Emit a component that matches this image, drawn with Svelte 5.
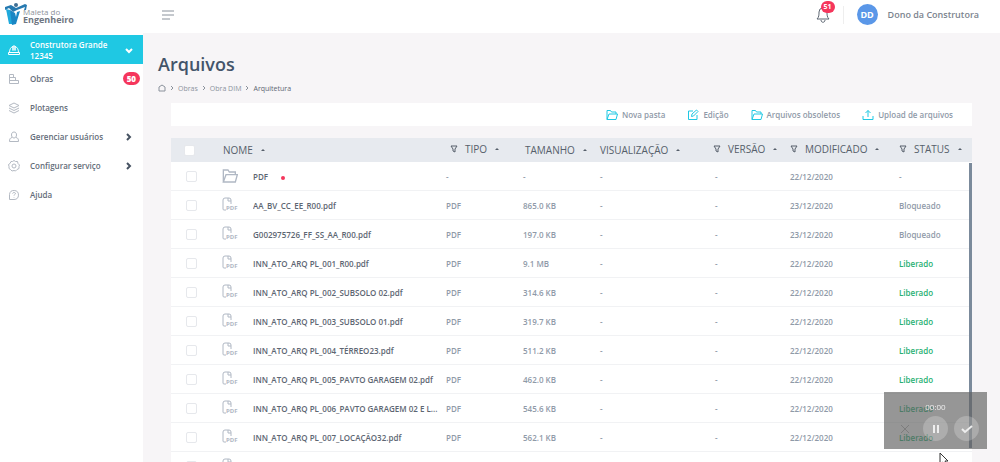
<script>
  let collapsed = $state(false)
  let allSelected = $state(false)

  const menu = [
    { label: 'Obras', icon: 'building', badge: 50 },
    { label: 'Plotagens', icon: 'layers' },
    { label: 'Gerenciar usuários', icon: 'user', children: true },
    { label: 'Configurar serviço', icon: 'gear', children: true },
    { label: 'Ajuda', icon: 'help' },
  ]

  const actions = [
    { label: 'Nova pasta', icon: 'folder' },
    { label: 'Edição', icon: 'edit' },
    { label: 'Arquivos obsoletos', icon: 'folder' },
    { label: 'Upload de arquivos', icon: 'upload' },
  ]

  const columns = [
    { id: 'tipo', label: 'TIPO', filter: true },
    { id: 'tamanho', label: 'TAMANHO' },
    { id: 'visualizacao', label: 'VISUALIZAÇÃO' },
    { id: 'versao', label: 'VERSÃO', filter: true },
    { id: 'modificado', label: 'MODIFICADO', filter: true },
    { id: 'status', label: 'STATUS', filter: true },
  ]

  const pdf = (name, size, date, status) => ({ name, type: 'PDF', size, date, status })

  const files = [
    { name: 'PDF', folder: true, type: '-', size: '-', date: '22/12/2020', status: '-' },
    pdf('AA_BV_CC_EE_R00.pdf', '865.0 KB', '23/12/2020', 'Bloqueado'),
    pdf('G002975726_FF_SS_AA_R00.pdf', '197.0 KB', '23/12/2020', 'Bloqueado'),
    pdf('INN_ATO_ARQ PL_001_R00.pdf', '9.1 MB', '22/12/2020', 'Liberado'),
    pdf('INN_ATO_ARQ PL_002_SUBSOLO 02.pdf', '314.6 KB', '22/12/2020', 'Liberado'),
    pdf('INN_ATO_ARQ PL_003_SUBSOLO 01.pdf', '319.7 KB', '22/12/2020', 'Liberado'),
    pdf('INN_ATO_ARQ PL_004_TÉRREO23.pdf', '511.2 KB', '22/12/2020', 'Liberado'),
    pdf('INN_ATO_ARQ PL_005_PAVTO GARAGEM 02.pdf', '462.0 KB', '22/12/2020', 'Liberado'),
    pdf('INN_ATO_ARQ PL_006_PAVTO GARAGEM 02 E L...', '545.6 KB', '22/12/2020', 'Liberado'),
    pdf('INN_ATO_ARQ PL_007_LOCAÇÃO32.pdf', '562.1 KB', '22/12/2020', 'Liberado'),
    { name: '' },
  ]
</script>

{#snippet icon(name)}
  <svg class="icon" viewBox="0 0 24 24" aria-hidden="true">
    {#if name === 'building'}
      <path d="M3 21V3h8v6H3M3 9h12v6H3M3 15h18v6H3" />
    {:else if name === 'layers'}
      <path d="M12 2l10 5-10 5L2 7zM2 12l10 5 10-5M2 17l10 5 10-5" />
    {:else if name === 'user'}
      <path d="M12 2c4 0 5 3 5 6s-2 6-5 6-5-3-5-6 1-6 5-6zM8 13c-4 1-5 3-5 8h18c0-5-1-7-5-8" />
    {:else if name === 'gear'}
      <path d="M12 1l3 2 4 0 1 4 3 3-1 3 0 4-4 2-3 3-3-1-4 1-3-3-3-2 0-4-1-4 3-2 2-4 3 0z" />
      <circle cx="12" cy="12" r="4" />
    {:else if name === 'help'}
      <path d="M3 21V11a9 9 0 1 1 9 10zM9 9c1-3 6-2 6 0 0 2-3 2-3 4M12 16v1" />
    {:else if name === 'folder'}
      <path d="M2 21V3h7l2 3h9v4M2 21L6 10h17l-3 11z" />
    {:else if name === 'edit'}
      <path d="M12 4H3v17h17v-9M9 15l1-5 9-8 3 3-9 9z" />
    {:else if name === 'upload'}
      <path d="M12 16V3M7 8l5-5 5 5M2 14v7h20v-7" />
    {/if}
  </svg>
{/snippet}

<div class="app">
  <aside class:collapsed>
    <a class="logo" href="#inicio">
      <svg viewBox="0 0 24 24" aria-hidden="true">
        <path d="M2 7l4 1 3 6-1 8H5z" fill="#1fa9dc" />
        <path d="M6 8l5 3 1 4 1-5 3-1-4 13-4 1z" fill="#1a86c4" />
        <path d="M1 5l6-2 5 3 9-4 2 1-1 5h-2l1-3-8 3-4 2-4-4-4 2z" fill="#2679b0" />
        <circle cx="12" cy="3" r="2" fill="#3f6f94" />
      </svg>
      <span>Maleta do<strong>Engenheiro</strong></span>
    </a>
    <button class="company">
      <svg class="icon" viewBox="0 0 24 24" aria-hidden="true">
        <path d="M1 17h22v4H1zM3 17c0-7 3-11 7-12v8V4h4v9V5c4 1 7 5 7 12" />
      </svg>
      <span>Construtora Grande 12345</span>
      <svg class="chevron" viewBox="0 0 8 8" aria-hidden="true"><path d="M1 3l3 3 3-3" /></svg>
    </button>
    <nav>
      {#each menu as item}
        <a href="#{item.icon}">
          {@render icon(item.icon)}
          <span>{item.label}</span>
          {#if item.badge}<b class="badge">{item.badge}</b>{/if}
          {#if item.children}
            <svg class="chevron" viewBox="0 0 8 8" aria-hidden="true"><path d="M2 1l3 3-3 3" /></svg>
          {/if}
        </a>
      {/each}
    </nav>
  </aside>

  <div class="page">
    <header>
      <button class="toggle" aria-label="Menu" onclick={() => (collapsed = !collapsed)}>
        <svg viewBox="0 0 12 10" aria-hidden="true"><path d="M0 1h12M0 5h12M0 9h8" /></svg>
      </button>
      <button class="bell" aria-label="Notificações">
        <svg viewBox="0 0 16 18" aria-hidden="true">
          <path d="M2 13c2-2 2-4 2-7a4 4 0 0 1 8 0c0 3 0 5 2 7zM6 14c0 3 4 3 4 0" />
        </svg>
        <b class="count">51</b>
      </button>
      <div class="profile">
        <span class="avatar">DD</span>
        <span>Dono da Construtora</span>
      </div>
    </header>

    <main>
      <h1>Arquivos</h1>
      <div class="breadcrumb">
        <a href="#inicio" aria-label="Início">
          <svg class="home" viewBox="0 0 8 8" aria-hidden="true"><path d="M1 7V3l3-2 3 2v4z" /></svg>
        </a>
        {#each ['Obras', 'Obra DIM', 'Arquitetura'] as crumb}
          <svg class="sep" viewBox="0 0 4 8" aria-hidden="true"><path d="M1 2l2 2-2 2" /></svg>
          <a href="#{crumb}">{crumb}</a>
        {/each}
      </div>

      <div class="toolbar">
        {#each actions as action}
          <button>{@render icon(action.icon)}{action.label}</button>
        {/each}
      </div>

      <div class="files">
        <table>
          <colgroup>
            <col class="c-check" />
            <col class="c-icon" />
            <col />
            {#each columns as column}
              <col class="c-{column.id}" />
            {/each}
          </colgroup>
          <thead>
            <tr>
              <th class="check">
                <input type="checkbox" aria-label="Selecionar todos" bind:checked={allSelected} />
              </th>
              <th class="nome" colspan="2"><div class="head">NOME<i class="sort"></i></div></th>
              {#each columns as column}
                <th class={column.id}>
                  <div class="head" class:filtered={column.filter}>
                    {#if column.filter}
                      <svg class="filter" viewBox="0 0 8 8" aria-hidden="true">
                        <path d="M1 1h6L5 4v3L3 6V4z" />
                      </svg>
                    {/if}
                    {column.label}<i class="sort"></i>
                  </div>
                </th>
              {/each}
            </tr>
          </thead>
          <tbody>
            {#each files as file}
              <tr>
                <td class="check">
                  <input type="checkbox" aria-label="Selecionar {file.name}" checked={allSelected} />
                </td>
                <td class="kind">
                  {#if file.folder}
                    {@render icon('folder')}
                  {:else}
                    <span class="pdf">
                      <svg viewBox="0 0 16 16" aria-hidden="true">
                        <path d="M4 13H2Q1 13 1 12V3Q1 1 3 1h4q2 0 2 2v4M6 1v3h3" />
                      </svg>
                      {#if file.type}<small>PDF</small>{/if}
                    </span>
                  {/if}
                </td>
                <td class="name">{file.name}{#if file.folder}<i class="dot"></i>{/if}</td>
                <td>{file.type}</td>
                <td>{file.size}</td>
                <td>{file.type && '-'}</td>
                <td class="versao">{file.type && '-'}</td>
                <td>{file.date}</td>
                <td class:released={file.status === 'Liberado'}>{file.status}</td>
              </tr>
            {/each}
          </tbody>
        </table>
        <div class="scrollbar"></div>
      </div>
    </main>
  </div>
</div>

<div class="recorder">
  <time>00:00</time>
  <div class="controls">
    <button class="cancel" aria-label="Cancelar">
      <svg viewBox="0 0 12 12" aria-hidden="true"><path d="M2 2l8 8M10 2l-8 8" /></svg>
    </button>
    <button aria-label="Pausar">
      <svg viewBox="0 0 12 12" aria-hidden="true"><path d="M4 2v8M8 2v8" /></svg>
    </button>
    <button aria-label="Concluir">
      <svg viewBox="0 0 12 12" aria-hidden="true"><path d="M1 6l3 3 7-6" /></svg>
    </button>
  </div>
</div>
<svg class="cursor" viewBox="0 0 10 14" aria-hidden="true">
  <path d="M1 1v11l3-2 2 4 2-1-2-4h3z" />
</svg>

<style>
  :global(body) {
    margin: 0;
    overflow: hidden;
    font-family: 'Open Sans', 'Noto Sans', sans-serif;
    color: #646d79;
    background: #f7f5f7;
  }
  svg {
    display: block;
    flex: none;
    fill: none;
    stroke: currentColor;
  }
  a {
    color: inherit;
    text-decoration: none;
  }
  button {
    display: flex;
    align-items: center;
    padding: 0;
    border: 0;
    background: none;
    color: inherit;
    font: inherit;
    cursor: pointer;
  }
  .icon {
    width: 12px;
    height: 12px;
    stroke-width: 2;
  }
  .app {
    display: flex;
    height: 100vh;
  }
  aside {
    flex: none;
    width: 143px;
    background: #fff;
  }
  aside.collapsed {
    display: none;
  }
  .logo {
    display: flex;
    height: 35px;
    padding-left: 4px;
    box-sizing: border-box;
    font-size: 8px;
    line-height: 8px;
    color: #8d939b;
  }
  .logo svg {
    width: 24px;
    height: 24px;
    margin-right: -5px;
    margin-top: 2px;
    stroke: none;
  }
  .logo span {
    padding-top: 8px;
  }
  .logo strong {
    display: block;
    font-size: 9px;
    color: #6f7681;
  }
  .company {
    width: 100%;
    height: 29px;
    padding: 0 10px 0 8px;
    gap: 10px;
    background: #1fc8e3;
    color: #fff;
    font-size: 8px;
    font-weight: 600;
    line-height: 11px;
    text-align: left;
  }
  .company span,
  nav span {
    flex: 1;
  }
  .chevron {
    width: 8px;
    height: 8px;
    stroke-width: 2;
  }
  nav {
    display: flex;
    flex-direction: column;
  }
  nav a {
    display: flex;
    align-items: center;
    gap: 10px;
    height: 29px;
    padding: 0 10px 0 8px;
    font-size: 8px;
    font-weight: 600;
  }
  nav .icon {
    color: #b3b9c2;
  }
  nav .chevron {
    color: #465262;
  }
  .badge {
    margin-right: -7px;
    padding: 0 4px;
    border-radius: 7px;
    background: #f5365c;
    color: #fff;
    font-size: 8px;
    line-height: 13px;
  }
  .page {
    display: flex;
    flex: 1;
    flex-direction: column;
    min-width: 0;
  }
  header {
    display: flex;
    flex: none;
    align-items: center;
    height: 33px;
    padding: 0 21px 4px 19px;
    box-sizing: border-box;
    background: #fff;
  }
  .toggle svg {
    width: 12px;
    height: 10px;
    color: #8a929c;
  }
  .bell {
    position: relative;
    margin-left: auto;
    padding-right: 12px;
    border-right: 1px solid #eee;
  }
  .bell svg {
    width: 16px;
    height: 18px;
    color: #5d6672;
  }
  .count {
    position: absolute;
    top: -5px;
    left: 6px;
    padding: 0 3px;
    border-radius: 6px;
    background: #f5365c;
    color: #fff;
    font-size: 7px;
    line-height: 12px;
  }
  .profile {
    display: flex;
    align-items: center;
    gap: 10px;
    padding-left: 13px;
    font-size: 9px;
    font-weight: 600;
    color: #7b838e;
  }
  .avatar {
    width: 21px;
    border-radius: 50%;
    background: #5a97e8;
    color: #fff;
    font-weight: 700;
    line-height: 21px;
    text-align: center;
  }
  main {
    display: flex;
    flex: 1;
    flex-direction: column;
    min-height: 0;
    padding: 19px 28px 0 15px;
  }
  h1 {
    margin: 0;
    font-size: 18px;
    font-weight: 600;
    line-height: 24px;
    color: #43546a;
  }
  .breadcrumb {
    display: flex;
    align-items: center;
    gap: 4px;
    height: 10px;
    margin-top: 7px;
    font-size: 7px;
    color: #8b929c;
  }
  .breadcrumb a:last-child {
    color: #5d6672;
  }
  .home {
    width: 8px;
    height: 8px;
  }
  .sep {
    width: 4px;
    height: 8px;
  }
  .toolbar {
    display: flex;
    flex: none;
    align-items: center;
    justify-content: flex-end;
    gap: 22px;
    height: 23px;
    margin: 10px 0 12px 13px;
    padding-right: 19px;
    background: #fff;
    color: #8f9aa8;
    font-size: 8px;
    font-weight: 600;
  }
  .toolbar button {
    gap: 4px;
  }
  .toolbar .icon {
    color: #1fc8e3;
  }
  .files {
    position: relative;
    flex: 1;
    min-height: 0;
    margin-left: 13px;
    overflow: hidden;
    background: #fff;
  }
  table {
    width: 100%;
    table-layout: fixed;
    border-collapse: collapse;
    font-size: 8px;
    font-weight: 600;
    color: #8f9aa8;
  }
  .c-check {
    width: 42px;
  }
  .c-icon {
    width: 40px;
  }
  .c-tipo,
  .c-tamanho,
  .c-versao {
    width: 77px;
  }
  .c-visualizacao {
    width: 113px;
  }
  .c-modificado {
    width: 109px;
  }
  .c-status {
    width: 73px;
  }
  th,
  td {
    padding: 0;
    text-align: left;
    white-space: nowrap;
  }
  th {
    height: 24px;
    background: #e7eaef;
    color: #565f6b;
    font-size: 10px;
    font-weight: 500;
  }
  td {
    height: 28px;
    border-bottom: 1px solid #f1f2f4;
  }
  .head {
    display: flex;
    align-items: center;
  }
  .filtered {
    margin-top: -2px;
  }
  .nome {
    padding-left: 10px;
  }
  .tipo {
    padding-left: 4px;
  }
  .tamanho {
    padding-left: 2px;
  }
  td.versao {
    padding-left: 2px;
  }
  .sort {
    margin-left: 8px;
    border: 2px solid transparent;
    border-top: 0;
    border-bottom-color: #565f6b;
  }
  .filter {
    width: 8px;
    height: 8px;
    margin-right: 7px;
  }
  input {
    display: block;
    width: 11px;
    height: 11px;
    margin: 0 0 0 15px;
    box-sizing: border-box;
    border: 1px solid #e6e8ec;
    border-radius: 2px;
    background: #fff;
    appearance: none;
  }
  th input {
    margin-left: 13px;
  }
  input:checked {
    background: #1fc8e3;
  }
  .kind {
    padding-left: 9px;
    color: #b0b8c4;
  }
  .kind .icon {
    width: 16px;
    height: 16px;
  }
  .pdf {
    position: relative;
    display: block;
  }
  .pdf svg {
    width: 16px;
    height: 16px;
  }
  .pdf small {
    position: absolute;
    top: 8px;
    left: 4px;
    font-size: 6px;
    font-weight: 700;
    line-height: 6px;
  }
  .name {
    overflow: hidden;
    text-overflow: ellipsis;
    color: #5d6672;
  }
  .dot {
    display: inline-block;
    width: 4px;
    height: 4px;
    margin-left: 13px;
    border-radius: 50%;
    background: #f5365c;
  }
  .released {
    color: #27b072;
  }
  .scrollbar {
    position: absolute;
    top: 25px;
    right: 0;
    bottom: 14px;
    width: 3px;
    background: #7b8a9b;
  }
  .recorder {
    position: fixed;
    right: 13px;
    bottom: 13px;
    width: 103px;
    height: 57px;
    background: rgba(95, 95, 95, 0.66);
    color: #eee;
    font-size: 8px;
    text-align: center;
  }
  .recorder time {
    display: block;
    padding-top: 10px;
    line-height: 10px;
  }
  .controls {
    display: flex;
    justify-content: center;
    gap: 6px;
    margin-top: 4px;
  }
  .controls button {
    justify-content: center;
    width: 25px;
    height: 25px;
    border-radius: 50%;
    background: rgba(255, 255, 255, 0.22);
  }
  .controls .cancel {
    background: none;
    color: #7d7d7d;
  }
  .controls svg {
    width: 12px;
    height: 12px;
    stroke-width: 2;
  }
  .controls .cancel svg {
    stroke-width: 1;
  }
  .cursor {
    position: fixed;
    right: 51px;
    bottom: -4px;
    width: 10px;
    height: 14px;
    fill: #fff;
    stroke: #333;
  }
</style>
